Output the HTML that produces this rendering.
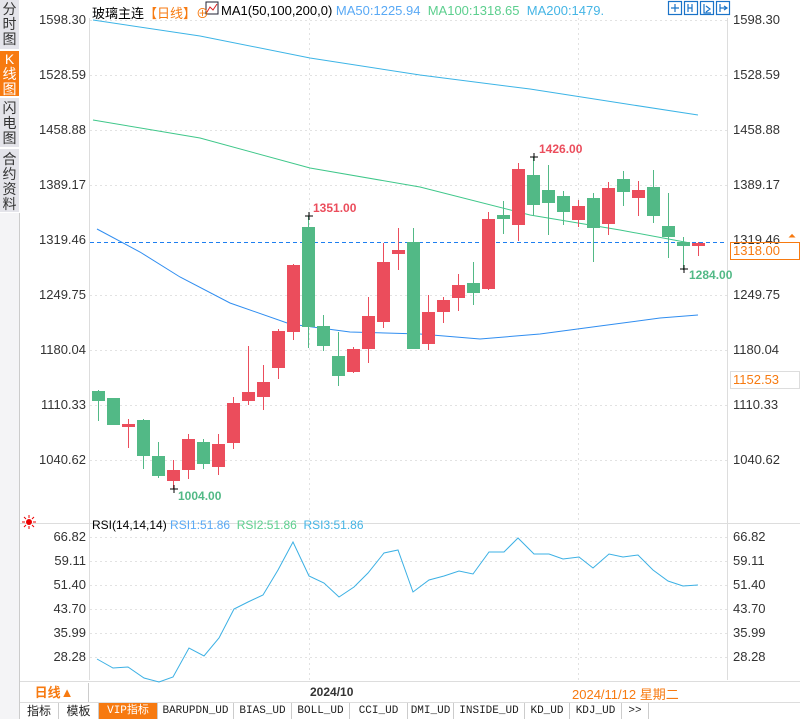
<!DOCTYPE html>
<html><head><meta charset="utf-8"><style>
body{margin:0;width:800px;height:719px;background:#fff;position:relative;overflow:hidden;font-family:"Liberation Sans","Noto Sans CJK SC",sans-serif;}
.side{position:absolute;left:0;width:19px;background:#e4e4ea;color:#333;font-size:14px;line-height:15px;text-align:center;border-bottom:1px solid #fff;}
.t{position:absolute;font-size:13px;white-space:nowrap;}
.tab{position:absolute;top:703px;height:16px;font-size:11px;font-family:"Liberation Mono","Noto Sans CJK SC",monospace;line-height:16px;border-right:1px solid #ccc;text-align:center;color:#222}
</style></head><body>
<div class="side" style="top:0;height:50px;padding-top:2px;box-sizing:border-box">分<br>时<br>图</div>
<div class="side" style="top:51px;height:46px;background:#f77a10;color:#fff;padding-top:1px;box-sizing:border-box">K<br>线<br>图</div>
<div class="side" style="top:98px;height:50px;padding-top:3px;box-sizing:border-box">闪<br>电<br>图</div>
<div class="side" style="top:149px;height:64px;padding-top:3px;box-sizing:border-box">合<br>约<br>资<br>料</div>
<div style="position:absolute;left:0;top:213px;width:19px;height:506px;background:#f4f4f6;border-right:1px solid #ccc"></div>

<svg style="position:absolute;left:0;top:0" width="800" height="719">
<g stroke="#e2e2e2" stroke-dasharray="2,3" stroke-width="1">
<line x1="90" y1="20.5" x2="727" y2="20.5"/><line x1="90" y1="75.5" x2="727" y2="75.5"/><line x1="90" y1="130.5" x2="727" y2="130.5"/><line x1="90" y1="185.5" x2="727" y2="185.5"/><line x1="90" y1="295.5" x2="727" y2="295.5"/><line x1="90" y1="350.5" x2="727" y2="350.5"/><line x1="90" y1="405.5" x2="727" y2="405.5"/><line x1="90" y1="460.5" x2="727" y2="460.5"/>
<line x1="90" y1="537.5" x2="727" y2="537.5"/><line x1="90" y1="561.5" x2="727" y2="561.5"/><line x1="90" y1="585.5" x2="727" y2="585.5"/><line x1="90" y1="609.5" x2="727" y2="609.5"/><line x1="90" y1="633.5" x2="727" y2="633.5"/><line x1="90" y1="657.5" x2="727" y2="657.5"/>
<line x1="309.5" y1="18" x2="309.5" y2="680"/><line x1="578.5" y1="18" x2="578.5" y2="680"/>
</g>
<g stroke="#ddd"><line x1="89.5" y1="18" x2="89.5" y2="680"/><line x1="727.5" y1="18" x2="727.5" y2="680"/><line x1="20" y1="523.5" x2="800" y2="523.5"/><line x1="20" y1="681.5" x2="800" y2="681.5"/><line x1="20" y1="702.5" x2="800" y2="702.5"/></g>
<polyline fill="none" stroke="#3cb4e6" stroke-width="1" points="93,20 200,36 310,58 420,75 530,89 620,103 698,115"/>
<polyline fill="none" stroke="#3fc78a" stroke-width="1" points="93,120 200,138 310,168 420,187 530,215 620,230 690,243"/>
<polyline fill="none" stroke="#2f8df0" stroke-width="1" points="97,229 140,252 180,277 230,303 290,324 350,332 420,334 480,339 540,334 600,326 660,318 698,315"/>
<line x1="90" y1="242.5" x2="727" y2="242.5" stroke="#1e7ff0" stroke-dasharray="4,3"/>
<g id="c"></g>
<polyline fill="none" stroke="#3bb0e4" stroke-width="1" points="97,659 113,668 128,667 144,678 159,682 173,677 189,648 204,656 219,638 234,609 248,602 263,595 278,570 293,542 309,576 324,583 339,597 354,587 368,573 384,553 398,550 413,592 429,580 444,576 459,571 473,574 489,552 504,552 518,538 534,554 549,554 563,559 579,557 593,568 609,554 623,557 638,555 653,570 668,581 683,586 698,585"/>
<g stroke="#000"><line x1="305" y1="216" x2="313" y2="216"/><line x1="309" y1="212" x2="309" y2="220"/>
<line x1="170" y1="489" x2="178" y2="489"/><line x1="174" y1="485" x2="174" y2="493"/>
<line x1="530" y1="157" x2="538" y2="157"/><line x1="534" y1="153" x2="534" y2="161"/>
<line x1="680" y1="269" x2="688" y2="269"/><line x1="684" y1="265" x2="684" y2="273"/></g>
<g transform="translate(668,1)" stroke="#1a73c8" fill="none" stroke-width="1.2"><rect x="0.5" y="0.5" width="13" height="13"/><rect x="16.5" y="0.5" width="13" height="13"/><rect x="32.5" y="0.5" width="13" height="13"/><rect x="48.5" y="0.5" width="13" height="13"/>
<path d="M7 3v8M3 7h8M20 3v8M24 3v8M20 7h4M36 3v9h7M38 5l4 3-4 3M52 3v8M52 7h6M56 5l3 2-3 2"/></g>
<circle cx="29" cy="522" r="3" fill="#e00"/><g stroke="#e00"><path d="M29 515v3M29 526v3M22 522h3M33 522h3M24 517l2 2M32 525l2 2M34 517l-2 2M24 527l2-2"/></g>
<rect x="206" y="2" width="12" height="12" fill="#fff" stroke="#223"/><path d="M207 12l3-5 3 3 4-6" stroke="#d22" fill="none"/>
</svg>
<div class="t" style="left:92px;top:3px;font-size:13px">玻璃主连<span style="color:#f77a10">【日线】</span><span style="color:#f77a10">⊕</span></div>
<div class="t" style="left:221px;top:3px;font-size:13px">MA1(50,100,200,0) <span style="color:#59a9f5">MA50:1225.94</span> &nbsp;<span style="color:#5ccf8e">MA100:1318.65</span> &nbsp;<span style="color:#45b5e5">MA200:1479.</span></div>
<div class="t" style="left:92px;top:518px;font-size:12px">RSI(14,14,14) <span style="color:#59a9f5">RSI1:51.86</span> &nbsp;<span style="color:#5ccf8e">RSI2:51.86</span> &nbsp;<span style="color:#45b5e5">RSI3:51.86</span></div>
<div id="lab"></div>
<div class="t" style="left:313px;top:201px;color:#eb4d5c;font-weight:bold;font-size:12px">1351.00</div>
<div class="t" style="left:539px;top:142px;color:#eb4d5c;font-weight:bold;font-size:12px">1426.00</div>
<div class="t" style="left:178px;top:489px;color:#52b986;font-weight:bold;font-size:12px">1004.00</div>
<div class="t" style="left:689px;top:268px;color:#52b986;font-weight:bold;font-size:12px">1284.00</div>
<div class="t" style="left:730px;top:242px;width:66px;height:16px;border:1px solid #f77a10;color:#f77a10;line-height:16px;padding-left:2px">1318.00</div>
<div class="t" style="left:788px;top:231px;color:#f77a10;font-size:10px">⏶</div>
<div class="t" style="left:730px;top:371px;width:66px;height:16px;border:1px solid #ddd;color:#f77a10;line-height:16px;padding-left:2px">1152.53</div>
<div class="t" style="left:20px;top:683px;width:68px;height:19px;border-right:1px solid #ccc;color:#f77a10;font-weight:bold;line-height:19px;text-align:center">日线▲</div>
<div class="t" style="left:310px;top:685px;font-weight:bold;font-size:12px;color:#333">2024/10</div>
<div class="t" style="left:572px;top:684px;color:#f77a10">2024/11/12 星期二</div>
<div class="tab" style="left:20px;width:38px;font-family:'Liberation Sans','Noto Sans CJK SC',sans-serif;font-size:12px">指标</div>
<div class="tab" style="left:59px;width:39px;font-family:'Liberation Sans','Noto Sans CJK SC',sans-serif;font-size:12px">模板</div>
<div class="tab" style="left:99px;width:58px;background:#f77a10;color:#fff">VIP指标</div>
<div class="tab" style="left:158px;width:75px">BARUPDN_UD</div>
<div class="tab" style="left:234px;width:57px">BIAS_UD</div>
<div class="tab" style="left:292px;width:57px">BOLL_UD</div>
<div class="tab" style="left:350px;width:57px">CCI_UD</div>
<div class="tab" style="left:408px;width:45px">DMI_UD</div>
<div class="tab" style="left:454px;width:70px">INSIDE_UD</div>
<div class="tab" style="left:525px;width:44px">KD_UD</div>
<div class="tab" style="left:570px;width:51px">KDJ_UD</div>
<div class="tab" style="left:622px;width:26px">&gt;&gt;</div>
<script>
var C=[[92,391,401,390,421,0],[107,398,425,398,425,0],[122,424,427,419,448,1],[137,420,456,419,469,0],[152,456,476,442,478,0],[167,470,481,460,489,1],[182,439,470,434,479,1],[197,442,464,439,469,0],[212,444,467,434,475,1],[227,403,443,397,449,1],[242,392,401,346,405,1],[257,382,397,365,410,1],[272,331,368,329,379,1],[287,265,332,264,340,1],[302,227,327,216,348,0],[317,326,346,315,351,0],[332,356,376,332,386,0],[347,349,372,347,373,1],[362,316,349,297,363,1],[377,262,322,243,328,1],[392,250,254,228,270,1],[407,242,349,228,349,0],[422,312,344,295,350,1],[437,300,312,297,323,1],[452,285,298,274,311,1],[467,283,293,262,305,0],[482,219,289,212,290,1],[497,215,219,201,234,0],[512,169,225,163,241,1],[527,175,205,157,216,0],[542,190,203,165,235,0],[557,196,212,191,225,0],[572,206,220,200,227,1],[587,198,228,193,262,0],[602,188,224,182,235,1],[617,179,192,171,206,0],[632,190,198,181,216,1],[647,187,216,170,223,0],[662,226,237,193,258,0],[677,242,246,237,270,0],[692,243,246,242,256,1]];
var s='';C.forEach(function(c){var col=c[5]?'#eb4d5c':'#52b986',cx=c[0]+6.5;s+='<line x1="'+cx+'" y1="'+c[3]+'" x2="'+cx+'" y2="'+c[4]+'" stroke="'+col+'"/><rect x="'+c[0]+'" y="'+c[1]+'" width="13" height="'+Math.max(2,c[2]-c[1])+'" fill="'+col+'"/>';});
document.getElementById('c').innerHTML=s;
var L=[['1598.30',20],['1528.59',75],['1458.88',130],['1389.17',185],['1319.46',240],['1249.75',295],['1180.04',350],['1110.33',405],['1040.62',460]],R=[['66.82',537],['59.11',561],['51.40',585],['43.70',609],['35.99',633],['28.28',657]],h='';
L.concat(R).forEach(function(l){h+='<div class="t" style="right:714px;top:'+(l[1]-8)+'px;color:#333">'+l[0]+'</div><div class="t" style="left:733px;top:'+(l[1]-8)+'px;color:#333">'+l[0]+'</div>';});
document.getElementById('lab').innerHTML=h;
</script>
</body></html>
